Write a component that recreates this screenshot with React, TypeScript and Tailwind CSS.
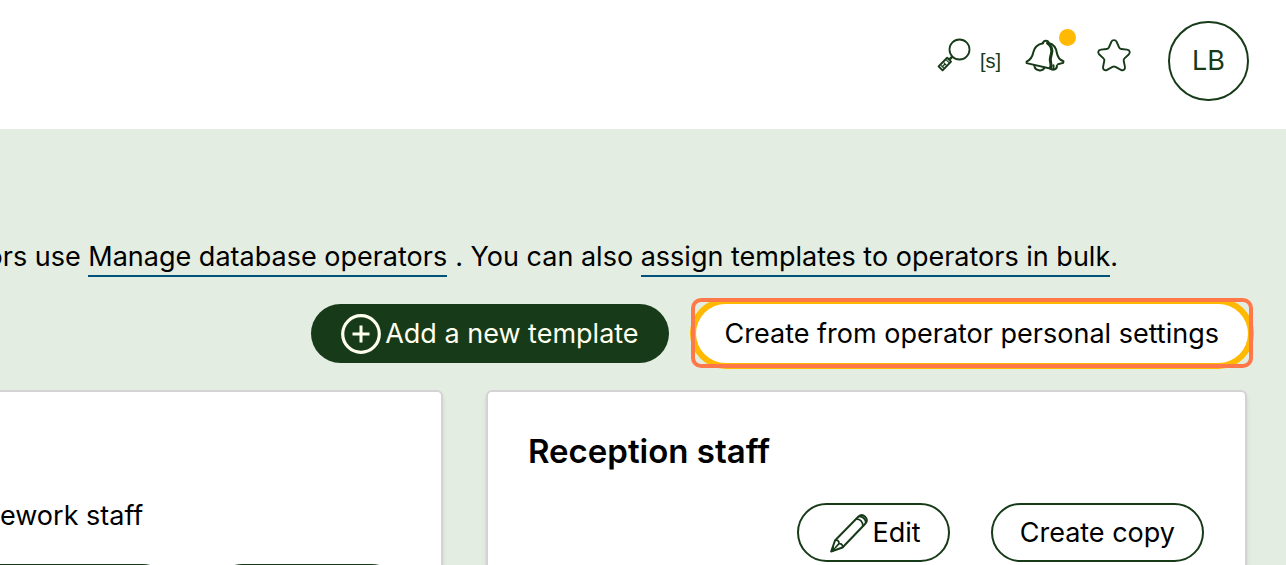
import type { ReactNode } from 'react';

function SearchIcon() {
  return (
    <svg className="h-9 w-9" viewBox="0 0 36 36" fill="none" stroke="#173a18" strokeWidth="1.8" strokeLinejoin="round" aria-hidden="true">
      <circle cx="23.5" cy="12.5" r="10" />
      <path d="M16.300 19.600l-2.700 2.800" strokeWidth="2.400" />
      <path d="M11.200 20.800l3.800 3.800L6.600 33.400 2.600 29.400z" strokeWidth="2" />
      <path d="M5.200 28.500l2.600 2.600M7.800 25.700l2.600 2.600M10.400 23.100l2.600 2.600M9 27l-3 3" strokeWidth="1.200" />
    </svg>
  );
}

function BellsIcon() {
  return (
    <svg className="h-9 w-10" viewBox="0 0 40 36" fill="none" stroke="#173a18" strokeWidth="2" strokeLinecap="round" strokeLinejoin="round" aria-hidden="true">
      <path d="M18 6.200c-5 .9-8.600 4.100-9.600 8.800C7.500 19.500 5.500 23 1.600 24.600v1.500L25 31.500" />
      <path d="M18 6.200c.3-3.300 5.200-3.300 5.700-.2 5.200 1.200 7.400 5 8.200 10 .7 4.200 2.600 6.900 6.600 8.200l-.4 1.700L33 27.200" />
      <path d="M22.500 6c4 2.800 5.200 6.800 3.800 11.300-1.300 4-1.600 5.300-.6 8.300.6 2 .6 3.600-.3 5.400" strokeWidth="3" />
      <path d="M9.300 28.300c.5 5.600 8.200 6.800 10.200 2.400M25.500 31.500c2.800 2.500 6.700.9 6.400-3M28.500 28.200v3.400" />
    </svg>
  );
}

function StarIcon() {
  return (
    <svg className="h-9 w-9" viewBox="0 0 36 36" fill="none" stroke="#173a18" strokeWidth="1.900" strokeLinejoin="round" aria-hidden="true">
      <path d="M15.300 5c1-2.500 4.400-2.500 5.400 0l2.500 5.600c.4.900 1 1.300 2 1.400l5.800.6c2.800.3 3.700 3.100 1.700 4.900L28.500 21.400c-.8.700-1 1.500-.8 2.400l1.200 5.800c.6 2.900-1.700 4.400-4 3.200l-5.400-2.900c-1-.5-2-.5-3 0l-5.400 2.900c-2.300 1.200-4.600-.3-4-3.200l1.200-5.800c.2-.9 0-1.700-.8-2.400l-4.200-3.900c-2-1.800-1.100-4.600 1.700-4.900l5.800-.6c1-.1 1.600-.5 2-1.400z" />
    </svg>
  );
}

function PlusCircleIcon() {
  return (
    <svg className="h-10 w-10" viewBox="0 0 40 40" fill="none" stroke="#fffff0" aria-hidden="true">
      <circle cx="20" cy="20" r="18.300" strokeWidth="3.200" />
      <path d="M20 11.500v17M11.500 20h17" strokeWidth="3" />
    </svg>
  );
}

function PencilIcon() {
  return (
    <svg className="h-10 w-10" viewBox="0 0 40 40" fill="none" stroke="#173a18" strokeWidth="2" strokeLinejoin="round" aria-hidden="true">
      <path d="M2.200 38.500L6 27.500 29.500 3.500c4.500-3.800 10.800 2.200 7 7L13.500 34.500z" />
      <path d="M6 27.500c2.400-1 4.300.5 4 3.200 2.300-.4 4.200 1.400 3.500 3.800M26.800 6.200c4.500-.3 7.200 2.300 7 6.800M29.800 3.300c4.400.2 6.900 2.900 7 7M10 30.700L6 35" strokeWidth="1.700" />
      <path d="M2.200 38.500l1.600-4.800 3.200 3.100z" fill="#173a18" strokeWidth="1" />
    </svg>
  );
}

function OutlineButton({ children, className = 'px-[27px]' }: { children: ReactNode; className?: string }) {
  return (
    <button
      type="button"
      className={`flex h-[59px] shrink-0 items-center justify-center rounded-full border-2 border-[#173a18] bg-white whitespace-nowrap ${className}`}
    >
      {children}
    </button>
  );
}

export default function App() {
  return (
    <div className="flex h-screen flex-col overflow-hidden bg-[#e3ede1] font-[Inter,sans-serif] text-[27px] leading-9 text-black">
      <header className="flex h-[129px] shrink-0 items-start justify-end bg-white pt-[21px] pr-[37px] text-[#173a18]">
        <button type="button" aria-label="Search" className="mt-4 flex items-end gap-2">
          <SearchIcon />
          <span className="font-['Liberation_Sans',sans-serif] text-[20px] leading-6">[s]</span>
        </button>
        <button type="button" aria-label="Notifications" className="relative mt-4 ml-6">
          <BellsIcon />
          <span className="absolute -top-2 -right-[11px] h-[17px] w-[17px] rounded-full bg-[#ffb900]" />
        </button>
        <button type="button" aria-label="Favourites" className="mt-4 ml-[31px]">
          <StarIcon />
        </button>
        <button type="button" className="ml-9 h-20 w-[81px] rounded-full border-2 border-[#173a18]">
          LB
        </button>
      </header>

      <main className="pt-[110px]">
        <p className="flex justify-end pr-[168px] whitespace-pre">
          ors use{' '}
          <a href="#operators" className="border-b-2 border-[#00527a]">Manage database operators</a>
          <span className="ml-2">. You can also </span>
          <a href="#bulk" className="border-b-2 border-[#00527a]">assign templates to operators in bulk</a>.
        </p>

        <div className="mt-[27px] flex justify-end gap-[27px] pr-[38px]">
          <button type="button" className="flex h-[59px] items-center gap-1 rounded-full bg-[#173a18] px-[30px] whitespace-nowrap text-[#fffff0]">
            <PlusCircleIcon />
            Add a new template
          </button>
          <div className="relative">
            <button type="button" className="h-[59px] rounded-full bg-white px-[29px] whitespace-nowrap ring-[6px] ring-[#ffb900]">
              Create from operator personal settings
            </button>
            <span className="pointer-events-none absolute -inset-x-[5px] -top-1.5 -bottom-[5px] rounded-[10px] border-4 border-[#ff7849]" />
          </div>
        </div>

        <div className="mt-[27px] grid grid-cols-[minmax(0,443fr)_minmax(0,761fr)] gap-[43px] pr-[39px]">
          <section className="h-72 rounded-r-md border-2 border-l-0 border-[#d3d3d3] bg-white pt-[106px] shadow-md">
            <p>ework staff</p>
            <div className="mt-[30px] flex justify-end gap-[41px] overflow-hidden pr-10">
              <OutlineButton>Create copy</OutlineButton>
              <OutlineButton className="w-[188px]">Delete</OutlineButton>
            </div>
          </section>
          <section className="h-72 rounded-md border-2 border-[#d3d3d3] bg-white pt-[39px] pr-[41px] pl-10 shadow-md">
            <h2 className="text-[33px] leading-10 font-semibold">Reception staff</h2>
            <div className="mt-8 flex justify-end gap-[41px]">
              <OutlineButton className="gap-1 pr-[27px] pl-[30px]">
                <PencilIcon />
                Edit
              </OutlineButton>
              <OutlineButton>Create copy</OutlineButton>
            </div>
          </section>
        </div>
      </main>
    </div>
  );
}
